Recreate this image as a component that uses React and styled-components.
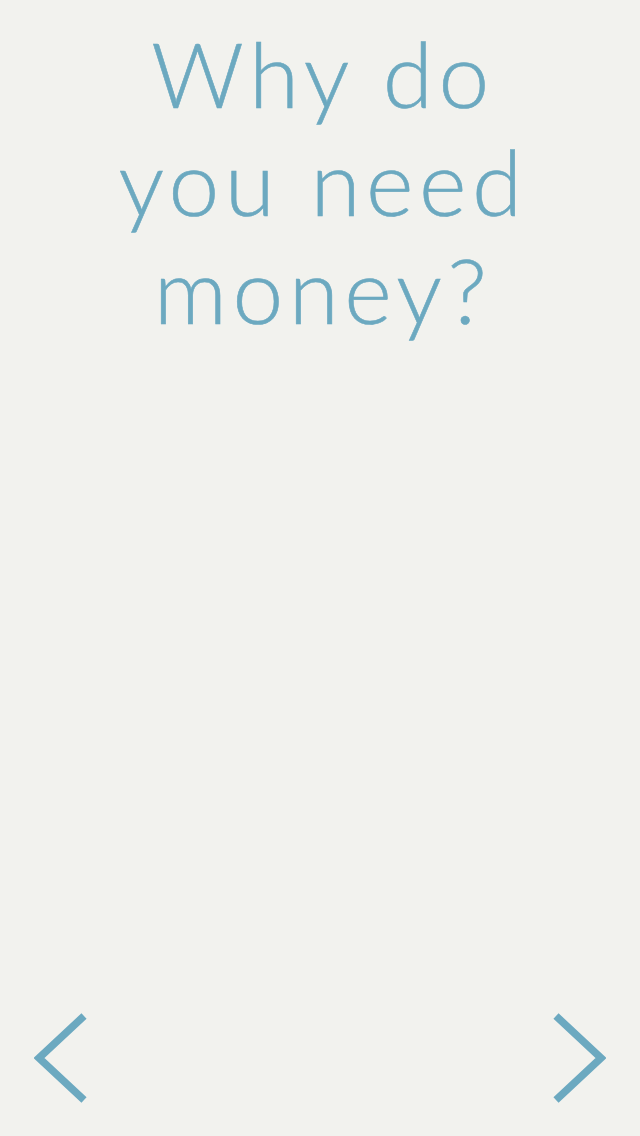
import React from 'react';
import styled, { createGlobalStyle } from 'styled-components';

const GlobalStyle = createGlobalStyle`
    html, body {
        margin: 0;
        padding: 0;
        background: #f2f2ee;
    }
`

const Screen = styled.div`
    width: 640px;
    height: 1136px;
    display: flex;
    flex-direction: column;
    justify-content: space-between;
    background: #f2f2ee;
    box-sizing: border-box;
    padding: 19px 0 32px;
`

const Title = styled.h1`
    margin: 0;
    padding-left: 6px;
    text-align: center;
    font-family: 'Lato', 'Noto Sans', sans-serif;
    font-weight: 300;
    font-size: 91px;
    line-height: 108px;
    letter-spacing: 5.5px;
    color: #6ca9c0;
    -webkit-text-stroke: 0.6px #6ca9c0;
`

const Nav = styled.div`
    display: flex;
    justify-content: space-between;
    padding: 0 34px;
`

const Arrow = styled.button`
    border: none;
    background: none;
    padding: 0;
    width: 56px;
    height: 92px;
    cursor: pointer;
    transform: ${p => (p.$flip ? 'scaleX(-1)' : 'none')};
`

const Chevron = ({ flip }) => (
    <Arrow $flip={flip} aria-label={flip ? 'Next' : 'Back'}>
        <svg width="56" height="92" viewBox="0 0 56 92">
            <polyline points="50,4 5,46 50,88" fill="none" stroke="#6ca9c0" strokeWidth="7.5" />
        </svg>
    </Arrow>
)

const App = () => {
    return (
        <Screen>
            <GlobalStyle />
            <Title>Why do<br />you need<br />money?</Title>
            <Nav>
                <Chevron />
                <Chevron flip />
            </Nav>
        </Screen>
    )
}

export default App
